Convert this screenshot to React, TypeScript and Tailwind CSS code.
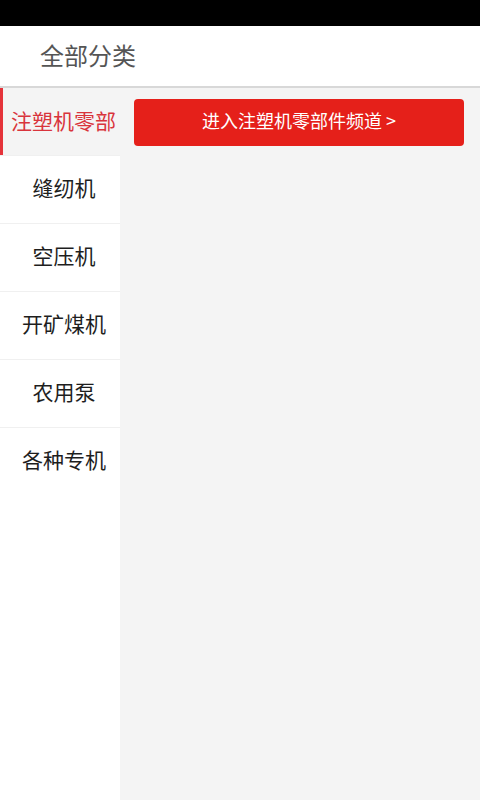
import React from "react";

const items = ["缝纫机", "空压机", "开矿煤机", "农用泵", "各种专机"];

export default function App() {
  return (
    <div
      className="w-[480px] h-[800px] flex flex-col bg-[#f4f4f4] overflow-hidden"
      style={{ fontFamily: '"Noto Sans CJK SC", "Noto Sans", sans-serif' }}
    >
      <div className="h-[26px] bg-black shrink-0" />
      <div className="h-[60px] bg-white flex items-center pl-[40px] pb-[3px] shrink-0">
        <span className="text-[24px] leading-none text-[#555555]">全部分类</span>
      </div>
      <div className="h-[2px] bg-[#d8d8d8] shrink-0" />
      <div className="flex flex-1 min-h-0">
        <div className="w-[120px] bg-white flex flex-col shrink-0">
          <div className="h-[67px] bg-[#f4f4f4] border-l-[3px] border-[#e5333a] flex items-center pl-[8px] pb-[3px] overflow-hidden whitespace-nowrap">
            <span className="text-[21px] leading-none text-[#d9343c]">注塑机零部</span>
          </div>
          {items.map((t) => (
            <div
              key={t}
              className="h-[68px] border-t border-[#f0f0f0] first:border-t-0 flex items-center justify-center pl-[8px] pb-[4px]"
            >
              <span className="text-[21px] leading-none text-[#1e1e1e]">{t}</span>
            </div>
          ))}
        </div>
        <div className="flex-1 pl-[14px] pr-[16px] pt-[11px]">
          <div className="h-[47px] rounded-[4px] bg-[#e5201a] flex items-center justify-center pb-[5px]">
            <span className="text-[18px] leading-none text-white">进入注塑机零部件频道 &gt;</span>
          </div>
        </div>
      </div>
    </div>
  );
}
